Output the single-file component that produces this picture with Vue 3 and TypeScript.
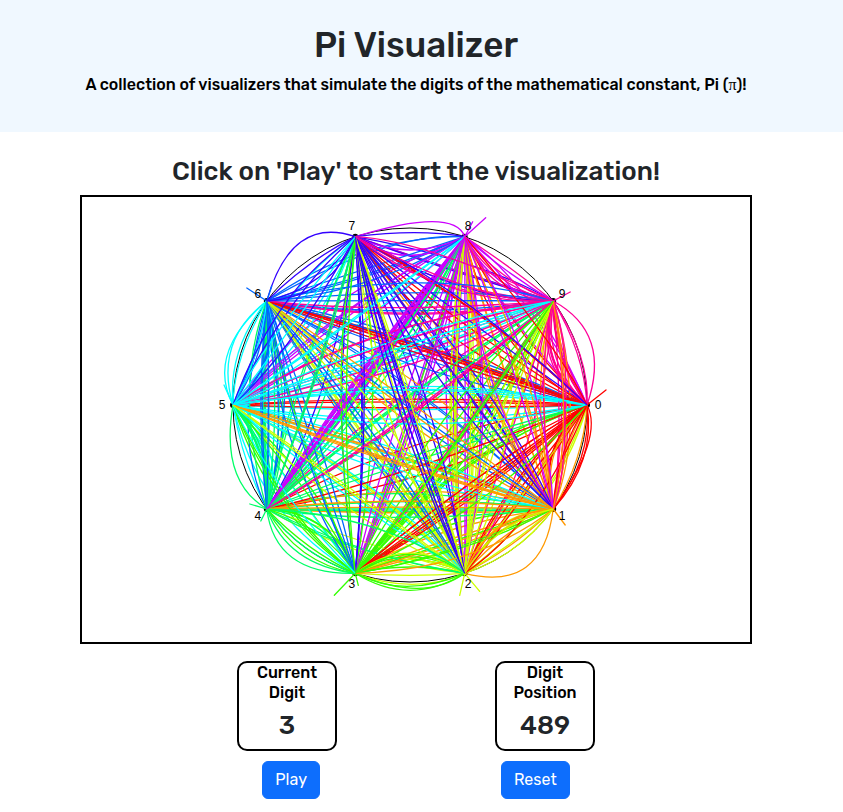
<script setup lang="ts">
import { computed, onBeforeUnmount, ref } from 'vue'

interface Point { x: number; y: number }
interface Curve { d: string; color: string }

const TOTAL = 1000
const START = 489
const CENTER: Point = { x: 328, y: 208 }
const RADIUS = 177

// Gibbons' unbounded spigot for the digits of pi.
function piDigits(count: number): number[] {
  const out: number[] = []
  let [q, r, t, k, n, l] = [1n, 0n, 1n, 1n, 3n, 3n]
  while (out.length < count) {
    if (4n * q + r - t < n * t) {
      out.push(Number(n))
      const nr = 10n * (r - n * t)
      n = (10n * (3n * q + r)) / t - 10n * n
      q *= 10n
      r = nr
    } else {
      const nr = (2n * q + r) * l
      const nn = (q * (7n * k) + 2n + r * l) / (t * l)
      q *= k
      t *= l
      l += 2n
      k += 1n
      n = nn
      r = nr
    }
  }
  return out
}

function onCircle(digit: number, radius: number): Point {
  const a = (digit * Math.PI) / 5
  return { x: CENTER.x + radius * Math.cos(a), y: CENTER.y + radius * Math.sin(a) }
}

const nodes = Array.from({ length: 10 }, (_, digit) => ({
  digit,
  dot: onCircle(digit, RADIUS),
  label: onCircle(digit, RADIUS + 11),
}))

// Control-point bends for the arcs that leave the circle, used up in order.
const bends: Record<string, [number, number][]> = {
  '09': [[42, -20], [20, 4], [14, 0], [-12, 4]],
  '78': [[44, -30]],
  '87': [[8, -8]],
  '67': [[-20, -54], [-4, -8]],
  '76': [[-4, -6]],
  '65': [[-44, 0], [-36, -12], [-22, -4], [-16, 4]],
  '56': [[10, 6], [14, 8], [8, 2]],
  '54': [[-30, 24]],
  '45': [[-8, 4]],
  '34': [[-36, 34], [-24, 24], [-10, 14]],
  '43': [[-14, 22], [-4, 10]],
  '23': [[0, 34], [14, 30], [-6, 26]],
  '32': [[4, 22], [0, 4]],
  '21': [[34, 52], [6, 6]],
  '12': [[10, 14], [4, 4]],
  '10': [[34, -20], [26, 4], [22, 2]],
  '01': [[14, 2]],
  '89': [[2, -2]],
  '98': [[-4, 4]],
  '03': [[-20, -34], [-16, -44], [-30, -30], [-24, -50], [14, 24], [18, 34]],
  '00': [[38, -30]],
  '11': [[24, 32]],
  '22': [[30, 36], [-10, 44]],
  '33': [[-42, 44], [6, 24]],
  '44': [[-34, -10], [-12, 24]],
  '55': [[-18, -40]],
  '66': [[-40, -26], [10, -30]],
  '88': [[42, -38], [16, -30]],
  '99': [[34, -18]],
}

// Pairs whose arcs stay in a tight bundle.
const bundles = ['48', '30', '60', '51']

const digits = piDigits(TOTAL)

function buildCurves(): Curve[] {
  const used: Record<string, number> = {}
  let seed = 31415
  const random = () => {
    seed = (seed * 16807) % 2147483647
    return seed / 2147483647
  }
  return digits.slice(1).map((to, i) => {
    const from = digits[i]
    const key = `${from}${to}`
    const index = used[key] ?? 0
    used[key] = index + 1
    const a = nodes[from].dot
    const b = nodes[to].dot
    const mid = { x: (a.x + b.x) / 2, y: (a.y + b.y) / 2 }
    const gap = Math.abs(from - to)
    const near = gap <= 1 || gap === 9
    const spread = bundles.includes(key) ? 30 : 76
    let dx = (random() - 0.5) * spread
    let dy = (random() - 0.5) * spread
    const bend = bends[key]?.[index]
    if (bend) {
      [dx, dy] = bend
    } else if (near) {
      const pull = 0.05 + random() * 0.2
      dx = (CENTER.x - mid.x) * pull
      dy = (CENTER.y - mid.y) * pull
    }
    const c = { x: mid.x + dx, y: mid.y + dy }
    return {
      d: `M${a.x.toFixed(1)} ${a.y.toFixed(1)}Q${c.x.toFixed(1)} ${c.y.toFixed(1)} ${b.x.toFixed(1)} ${b.y.toFixed(1)}`,
      color: `hsl(${to * 36} 100% 50%)`,
    }
  })
}

const curves = buildCurves()
const position = ref<number>(START)
const playing = ref<boolean>(false)
const currentDigit = computed<number>(() => digits[Math.max(position.value - 1, 0)])
const visibleCurves = computed<Curve[]>(() => curves.slice(0, Math.max(position.value - 1, 0)))
let timer: number | undefined

function stop(): void {
  playing.value = false
  window.clearInterval(timer)
}

function play(): void {
  if (playing.value) return
  playing.value = true
  timer = window.setInterval(() => {
    if (position.value >= TOTAL) stop()
    else position.value += 1
  }, 60)
}

function reset(): void {
  stop()
  position.value = 0
}

onBeforeUnmount(stop)
</script>

<template>
  <div class="page">
    <header class="hero">
      <h1>Pi Visualizer</h1>
      <p>A collection of visualizers that simulate the digits of the mathematical constant, Pi (<span class="pi">π</span>)!</p>
    </header>
    <main class="content">
      <h2>Click on 'Play' to start the visualization!</h2>
      <div class="stage">
        <svg viewBox="0 0 668 445" role="img" aria-label="Transitions between digits of pi">
          <circle :cx="CENTER.x" :cy="CENTER.y" :r="RADIUS" class="ring" />
          <circle v-for="n in nodes" :key="n.digit" :cx="n.dot.x" :cy="n.dot.y" r="3" />
          <path v-for="(c, i) in visibleCurves" :key="i" :d="c.d" :stroke="c.color" class="curve" />
          <text v-for="n in nodes" :key="n.digit" :x="n.label.x" :y="n.label.y + 4" class="label">{{ n.digit }}</text>
        </svg>
      </div>
      <div class="stats">
        <section class="card">
          <h3>Current Digit</h3>
          <output>{{ currentDigit }}</output>
        </section>
        <section class="card">
          <h3>Digit Position</h3>
          <output>{{ position }}</output>
        </section>
      </div>
      <div class="actions">
        <button type="button" @click="play">Play</button>
        <button type="button" @click="reset">Reset</button>
      </div>
    </main>
  </div>
</template>

<style>
body {
  margin: 0;
  background: #fff;
}
</style>

<style scoped>
.page {
  font-family: Rubik, Roboto, "Liberation Sans", sans-serif;
  font-weight: 500;
  color: #212529;
  text-align: center;
}
h1, h2, h3, p {
  margin: 0;
  font-weight: 500;
}
.hero {
  padding: 24px 11px 35px 0;
  background: #f0f8ff;
}
h1 {
  font-size: 35px;
  line-height: 42px;
}
.hero p {
  padding-top: 7px;
  font-size: 16px;
  line-height: 24px;
  color: #000;
}
.pi {
  font-family: "Liberation Serif", serif;
  font-weight: 400;
}
.content {
  padding: 23px 91px 12px 80px;
}
h2 {
  font-size: 26px;
  line-height: 34px;
  margin-bottom: 6px;
}
.stage {
  border: 2px solid #000;
}
svg {
  display: block;
  width: 100%;
}
.ring {
  fill: none;
  stroke: #000;
  stroke-width: 1;
}
.curve {
  fill: none;
  stroke-width: 1.3;
}
.label {
  font: 12px "Liberation Sans", Arial, sans-serif;
  text-anchor: middle;
  fill: #000;
}
.stats {
  display: flex;
  justify-content: center;
  gap: 158px;
  padding-top: 17px;
}
.card {
  box-sizing: border-box;
  width: 100px;
  height: 90px;
  padding: 0 8px;
  border: 2px solid #000;
  border-radius: 10px;
}
h3 {
  font-size: 16px;
  line-height: 20px;
  color: #000;
}
output {
  display: block;
  padding-top: 6px;
  font-size: 26px;
  line-height: 34px;
}
.actions {
  display: flex;
  justify-content: center;
  gap: 181px;
  padding-top: 10px;
}
button {
  padding: 6px 12px;
  border: 1px solid #0d6efd;
  border-radius: 6px;
  background: #0d6efd;
  color: #fff;
  font-family: inherit;
  font-weight: 400;
  font-size: 16px;
  line-height: 24px;
  cursor: pointer;
}
</style>
